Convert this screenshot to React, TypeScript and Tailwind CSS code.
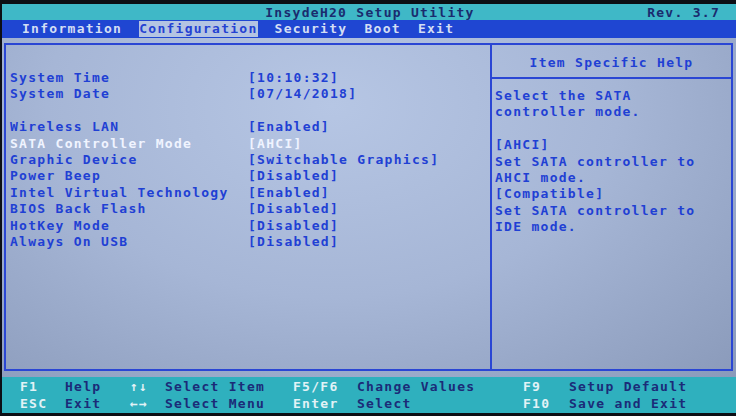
import React from "react";

const FONT = "font-['DejaVu_Sans_Mono',monospace] font-bold text-[13px] tracking-[1.28px] whitespace-pre";

const rows: { label: string; value: string; sel?: boolean; gap?: boolean }[] = [
  { label: "System Time", value: "[10:10:32]" },
  { label: "System Date", value: "[07/14/2018]" },
  { label: "", value: "", gap: true },
  { label: "Wireless LAN", value: "[Enabled]" },
  { label: "SATA Controller Mode", value: "[AHCI]", sel: true },
  { label: "Graphic Device", value: "[Switchable Graphics]" },
  { label: "Power Beep", value: "[Disabled]" },
  { label: "Intel Virtual Technology", value: "[Enabled]" },
  { label: "BIOS Back Flash", value: "[Disabled]" },
  { label: "HotKey Mode", value: "[Disabled]" },
  { label: "Always On USB", value: "[Disabled]" },
];

const help = [
  "Select the SATA",
  "controller mode.",
  "",
  "[AHCI]",
  "Set SATA controller to",
  "AHCI mode.",
  "[Compatible]",
  "Set SATA controller to",
  "IDE mode.",
];

export default function App() {
  return (
    <div className={`w-[736px] h-[416px] bg-[#0c0e14] pt-[4px] pl-[2px] overflow-hidden ${FONT}`}>
      {/* Title bar */}
      <div className="h-[16px] bg-[#3fb8c7] grid grid-cols-[1fr_auto_1fr] items-center leading-[16px] text-[#1a2b6e] pt-[1px]">
        <div />
        <div className="pl-[2px]">InsydeH20 Setup Utility</div>
        <div className="text-right pr-[16px]">Rev. 3.7</div>
      </div>
      {/* Menu bar */}
      <div className="h-[18px] bg-[#1f46d2] flex items-center gap-[17px] pl-[20px] leading-[16px] text-[#d4def4]">
        <span>Information</span>
        <span className="bg-[#b4c4e2] text-[#2442d2] h-[16px]">Configuration</span>
        <span>Security</span>
        <span>Boot</span>
        <span>Exit</span>
      </div>
      {/* Main area */}
      <div className="h-[339px] bg-[radial-gradient(ellipse_at_45%_20%,#b6c6e4_0%,#a6b6d6_50%,#8a9aba_100%)] pt-[5px] pl-[2px]">
        <div className="w-[729px] h-[328px] border-2 border-[#2a46d4] flex">
          {/* Left panel */}
          <div className="w-[484px] pt-[25px] pl-[4px] leading-[16.4px]">
            {rows.map((r, i) =>
              r.gap ? (
                <div key={i} className="h-[16.4px]" />
              ) : (
                <div
                  key={i}
                  className={`flex h-[16.4px] ${r.sel ? "text-[#f0f4ff]" : "text-[#1f40d4]"}`}
                >
                  <span className="w-[238px]">{r.label}</span>
                  <span>{r.value}</span>
                </div>
              )
            )}
          </div>
          {/* Right panel */}
          <div className="flex-1 border-l-2 border-[#2a46d4] flex flex-col text-[#1f40d4]">
            <div className="h-[34px] pt-[3px] border-b-2 border-[#2a46d4] flex items-center justify-center">
              Item Specific Help
            </div>
            <div className="pt-[9px] pl-[3px] leading-[16.4px]">
              {help.map((h, i) => (
                <div key={i} className="h-[16.4px]">{h}</div>
              ))}
            </div>
          </div>
        </div>
      </div>
      {/* Footer */}
      <div className="h-[36px] bg-[#2fb0be] pt-[1px] pl-[18px] leading-[17px]">
        <div className="flex">
          <span className="w-[45px] text-[#e2f2f6]">F1</span>
          <span className="w-[65px] text-[#1b2b78]">Help</span>
          <span className="w-[35px] text-[#e2f2f6]">↑↓</span>
          <span className="w-[128px] text-[#1b2b78]">Select Item</span>
          <span className="w-[64px] text-[#e2f2f6]">F5/F6</span>
          <span className="w-[166px] text-[#1b2b78]">Change Values</span>
          <span className="w-[46px] text-[#e2f2f6]">F9</span>
          <span className="text-[#1b2b78]">Setup Default</span>
        </div>
        <div className="flex">
          <span className="w-[45px] text-[#e2f2f6]">ESC</span>
          <span className="w-[65px] text-[#1b2b78]">Exit</span>
          <span className="w-[35px] text-[#e2f2f6]">←→</span>
          <span className="w-[128px] text-[#1b2b78]">Select Menu</span>
          <span className="w-[64px] text-[#e2f2f6]">Enter</span>
          <span className="w-[166px] text-[#1b2b78]">Select</span>
          <span className="w-[46px] text-[#e2f2f6]">F10</span>
          <span className="text-[#1b2b78]">Save and Exit</span>
        </div>
      </div>
    </div>
  );
}
